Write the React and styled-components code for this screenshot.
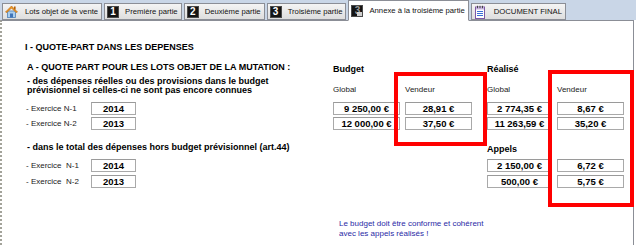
import styled, { createGlobalStyle } from 'styled-components'

const GlobalStyle = createGlobalStyle`
	body {
		margin: 0;
		background: #fff;
		font-family: 'Liberation Sans', Arial, sans-serif;
	}
`

const Frame = styled.div`
	width: 636px;
	height: 245px;
	display: flex;
	flex-direction: column;
	overflow: hidden;
	background: #fff;
`

const TabStrip = styled.div`
	flex: none;
	height: 20px;
	display: flex;
	align-items: flex-end;
	gap: 2px;
	padding-left: 2px;
	background: #c9d6e7;
	position: relative;
	z-index: 1;
`

const Tab = styled.div`
	box-sizing: border-box;
	display: flex;
	align-items: center;
	gap: ${p => p.$gap || 6}px;
	height: ${p => (p.$active ? 21 : 17)}px;
	margin-bottom: ${p => (p.$active ? -1 : 0)}px;
	padding: 0 3px 0 2px;
	border: 1px solid #8b8e96;
	border-bottom-color: ${p => (p.$active ? '#fff' : '#8b8e96')};
	background: ${p => (p.$active ? '#fff' : 'linear-gradient(#f4f4f4, #dedede)')};
	font-size: 7.7px;
	color: #111;
	white-space: nowrap;
`

const NumIcon = styled.span`
	box-sizing: border-box;
	width: 12px;
	height: 12px;
	background: #141414;
	border: 1px solid #4a4a4a;
	color: ${p => (p.$dim ? '#9a9a9a' : '#fff')};
	font-weight: bold;
	font-size: 10px;
	line-height: 10px;
	text-align: center;
	position: relative;
	&::after {
		content: '';
		display: ${p => (p.$dim ? 'block' : 'none')};
		position: absolute;
		right: 0;
		bottom: 0;
		width: 5px;
		height: 4px;
		background: #cfcfcf;
	}
`

const Panel = styled.div`
	flex: 1;
	position: relative;
	margin-right: 2px;
	padding: 21px 0 0 24px;
	border-top: 1px solid #8b8e96;
	border-left: 2px dotted #a3a39a;
	border-right: 1px solid #8b8e96;
`

const Row = styled.div`
	display: grid;
	grid-template-columns: 65px 45px 197px 67px 5px 67px 15px 65px 5px 67px;
	margin-top: ${p => p.$mt || 0}px;
`

const Heading = styled.div`
	grid-column: ${p => p.$col || '1 / -1'};
	margin-left: ${p => p.$shift || 0}px;
	font-size: 9px;
	font-weight: bold;
	line-height: 11px;
	color: #000;
	white-space: nowrap;
`

const ColTitle = styled(Heading)`
	padding-top: 2px;
`

const Para = styled.div`
	grid-column: 1 / 4;
	margin-left: 1px;
	font-size: 9px;
	font-weight: bold;
	line-height: 9px;
	padding-top: 1px;
	white-space: nowrap;
`

const Caption = styled.div`
	grid-column: ${p => p.$col};
	align-self: end;
	font-size: 8px;
	line-height: 10px;
	color: #222;
`

const Label = styled.div`
	grid-column: 1;
	align-self: center;
	font-size: 8px;
	line-height: 10px;
	color: #222;
	white-space: pre;
`

const Field = styled.div`
	grid-column: ${p => p.$col};
	box-sizing: border-box;
	height: 13px;
	border: 1px solid #a9a9a9;
	border-top-color: #9a9a9a;
	background: #fff;
	font-size: 9.5px;
	font-weight: bold;
	line-height: 11px;
	text-align: center;
	color: #000;
	white-space: nowrap;
`

const Note = styled.div`
	grid-column: 4 / -1;
	margin-left: 6px;
	font-size: 8px;
	line-height: 10px;
	color: #2a2aa6;
`

const Highlight = styled.div`
	position: absolute;
	left: ${p => p.$x}px;
	top: ${p => p.$y}px;
	width: ${p => p.$w}px;
	height: ${p => p.$h}px;
	box-sizing: border-box;
	border: 4px solid #ff0000;
	pointer-events: none;
`

const HouseIcon = () => (
	<svg width="13" height="13" viewBox="0 0 13 13">
		<rect x="2.5" y="6" width="8" height="6.5" fill="#a9cdee" stroke="#4d7fb5" strokeWidth="0.8" />
		<rect x="5" y="8.5" width="3" height="4" fill="#3f74b8" />
		<polygon points="0.5,7 6.5,1 12.5,7 11,7.5 6.5,3 2,7.5" fill="#f09a22" stroke="#b5610b" strokeWidth="0.6" />
		<rect x="9" y="1.5" width="1.6" height="3" fill="#b5610b" />
	</svg>
)

const DocIcon = () => (
	<svg width="12" height="14" viewBox="0 0 12 14">
		<rect x="1.5" y="2" width="9" height="11.5" fill="#fff" stroke="#7d5aa6" strokeWidth="1" />
		<rect x="2" y="2.5" width="8" height="2" fill="#c9b6e2" />
		<line x1="3.5" y1="0.8" x2="3.5" y2="3.2" stroke="#444" strokeWidth="1" />
		<line x1="6" y1="0.8" x2="6" y2="3.2" stroke="#444" strokeWidth="1" />
		<line x1="8.5" y1="0.8" x2="8.5" y2="3.2" stroke="#444" strokeWidth="1" />
		<line x1="3" y1="6.5" x2="9" y2="6.5" stroke="#3b6fd6" strokeWidth="1" />
		<line x1="3" y1="8.5" x2="9" y2="8.5" stroke="#3b6fd6" strokeWidth="1" />
		<line x1="3" y1="10.5" x2="9" y2="10.5" stroke="#3b6fd6" strokeWidth="1" />
	</svg>
)

const upperRows = [
	{label: '- Exercice N-1', year: '2014', values: ['9 250,00 €', '28,91 €', '2 774,35 €', '8,67 €']},
	{label: '- Exercice N-2', year: '2013', values: ['12 000,00 €', '37,50 €', '11 263,59 €', '35,20 €']},
]

const lowerRows = [
	{label: '- Exercice  N-1', year: '2014', values: ['2 150,00 €', '6,72 €']},
	{label: '- Exercice  N-2', year: '2013', values: ['500,00 €', '5,75 €']},
]

const DataRow = ({row, mt, cols}) => (
	<Row $mt={mt}>
		<Label>{row.label}</Label>
		<Field $col={2}>{row.year}</Field>
		{row.values.map((v, i) => (
			<Field key={i} $col={cols[i]}>{v}</Field>
		))}
	</Row>
)

const App = () => (
	<Frame>
		<GlobalStyle />
		<TabStrip>
			<Tab $gap={7}><HouseIcon />Lots objet de la vente</Tab>
			<Tab><NumIcon>1</NumIcon>Première partie</Tab>
			<Tab><NumIcon>2</NumIcon>Deuxième partie</Tab>
			<Tab><NumIcon>3</NumIcon>Troisième partie</Tab>
			<Tab $active><NumIcon $dim>3</NumIcon>Annexe à la troisième partie</Tab>
			<Tab $gap={8}><DocIcon />DOCUMENT FINAL</Tab>
		</TabStrip>
		<Panel>
			<Row>
				<Heading $shift={-1}>I - QUOTE-PART DANS LES DEPENSES</Heading>
			</Row>
			<Row $mt={9}>
				<Heading $col="1 / 4" $shift={1}>A - QUOTE PART POUR LES LOTS OBJET DE LA MUTATION :</Heading>
				<ColTitle $col={4}>Budget</ColTitle>
				<ColTitle $col={8}>Réalisé</ColTitle>
			</Row>
			<Row $mt={1}>
				<Para>
					- des dépenses réelles ou des provisions dans le budget<br />
					prévisionnel si celles-ci ne sont pas encore connues
				</Para>
				<Caption $col={4}>Global</Caption>
				<Caption $col={6}>Vendeur</Caption>
				<Caption $col={8}>Global</Caption>
				<Caption $col={10}>Vendeur</Caption>
			</Row>
			<DataRow row={upperRows[0]} mt={7} cols={[4, 6, 8, 10]} />
			<DataRow row={upperRows[1]} mt={2} cols={[4, 6, 8, 10]} />
			<Row $mt={12}>
				<Heading $col="1 / 4" $shift={1}>- dans le total des dépenses hors budget prévisionnel (art.44)</Heading>
				<ColTitle $col={8}>Appels</ColTitle>
			</Row>
			<DataRow row={lowerRows[0]} mt={4} cols={[8, 10]} />
			<DataRow row={lowerRows[1]} mt={3} cols={[8, 10]} />
			<Row $mt={31}>
				<Note>
					Le budget doit être conforme et cohérent<br />
					avec les appels réalisés !
				</Note>
			</Row>
			<Highlight $x={392} $y={51} $w={93} $h={74} />
			<Highlight $x={546} $y={49} $w={86} $h={137} />
		</Panel>
	</Frame>
)

export default App
